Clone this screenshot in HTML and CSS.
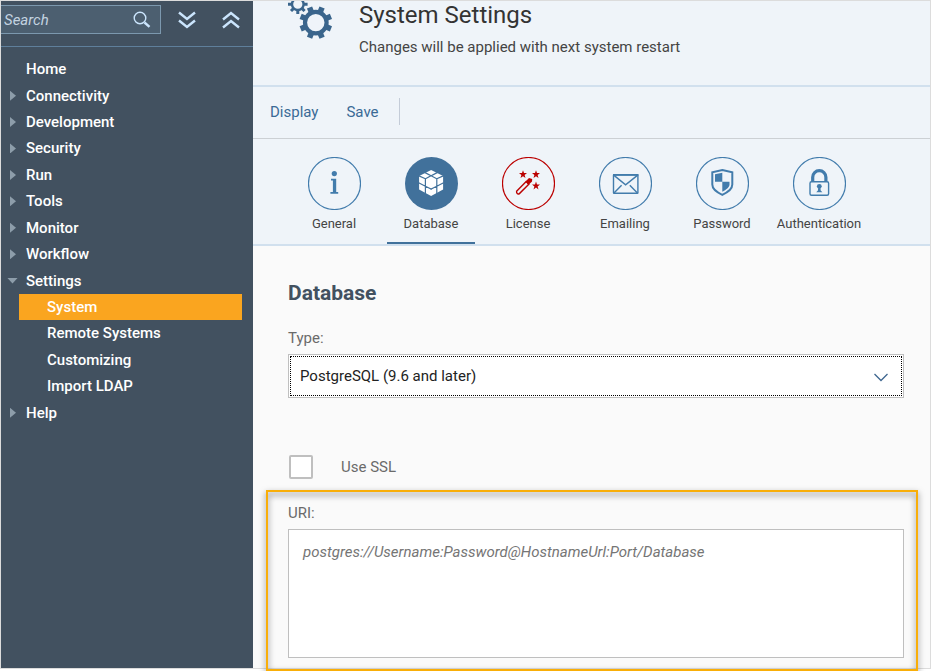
FILE: index.html
```html
<!DOCTYPE html>
<html lang="en">
<head>
<meta charset="utf-8">
<title>System Settings</title>
<link rel="stylesheet" href="styles.css">
</head>
<body>
<div class="app">
  <aside class="sidebar">
    <div class="search-bar">
      <div class="search">
        <input type="search" placeholder="Search" aria-label="Search">
        <button class="search-button" aria-label="Start search">
          <svg width="18" height="18" viewBox="0 0 18 18"><circle cx="7" cy="7" r="5.8" fill="none" stroke="currentColor" stroke-width="1.4"/><path d="M11.5 11.5l5 4.4" stroke="currentColor" stroke-width="2.4"/></svg>
        </button>
      </div>
      <button class="tree-button" aria-label="Expand all">
        <svg width="18" height="18" viewBox="0 0 18 18"><path d="M1 1.5l8 6.5 8-6.5M1 9.5l8 6.5 8-6.5"/></svg>
      </button>
      <button class="tree-button" aria-label="Collapse all">
        <svg width="18" height="18" viewBox="0 0 18 18"><path d="M1 8.5L9 2l8 6.5M1 16.5L9 10l8 6.5"/></svg>
      </button>
    </div>
    <nav>
      <ul class="tree">
        <li><a class="leaf" href="#">Home</a></li>
        <li><a class="closed" href="#">Connectivity</a></li>
        <li><a class="closed" href="#">Development</a></li>
        <li><a class="closed" href="#">Security</a></li>
        <li><a class="closed" href="#">Run</a></li>
        <li><a class="closed" href="#">Tools</a></li>
        <li><a class="closed" href="#">Monitor</a></li>
        <li><a class="closed" href="#">Workflow</a></li>
        <li class="group">
          <a class="open" href="#">Settings</a>
          <ul class="subtree">
            <li><a class="selected" href="#">System</a></li>
            <li><a href="#">Remote Systems</a></li>
            <li><a href="#">Customizing</a></li>
            <li><a href="#">Import LDAP</a></li>
          </ul>
        </li>
        <li><a class="closed" href="#">Help</a></li>
      </ul>
    </nav>
  </aside>

  <main>
    <header class="page-header">
      <svg class="gears" width="48" height="40" viewBox="287 1 48 40" fill="none" stroke="currentColor">
        <circle cx="315.8" cy="22.6" r="10.8" stroke-width="4.2"/>
        <g stroke-width="5.6">
          <path id="tooth" d="M315.8 10.6v-4.4" transform="rotate(22.5 315.8 22.6)"/>
          <use href="#tooth" transform="rotate(45 315.8 22.6)"/>
          <use href="#tooth" transform="rotate(90 315.8 22.6)"/>
          <use href="#tooth" transform="rotate(135 315.8 22.6)"/>
          <use href="#tooth" transform="rotate(180 315.8 22.6)"/>
          <use href="#tooth" transform="rotate(225 315.8 22.6)"/>
          <use href="#tooth" transform="rotate(270 315.8 22.6)"/>
          <use href="#tooth" transform="rotate(315 315.8 22.6)"/>
        </g>
        <circle cx="297.8" cy="4.2" r="5.8" stroke-width="2.4"/>
        <path stroke-width="3" d="M304 4.2h3.6M291.6 4.2H288M297.8 10.4v3.6M302.2 8.6l2.4 2.4M293.4 8.6l-2.4 2.4M302.2-.2l2.4-2.4"/>
      </svg>
      <div>
        <h1>System Settings</h1>
        <p>Changes will be applied with next system restart</p>
      </div>
    </header>

    <div class="toolbar">
      <button>Display</button>
      <button>Save</button>
      <span class="separator"></span>
    </div>

    <div class="tabs" role="tablist">
      <button class="tab" role="tab">
        <svg width="53" height="53" viewBox="0 0 53 53"><circle class="ring" cx="26.5" cy="26.5" r="26"/><circle cx="26.3" cy="16.6" r="2.6"/><path d="M23 21.8h5.2V35h2v1.8h-7.8V35h2.5V23.6H23z"/></svg>
        <span>General</span>
      </button>
      <button class="tab active" role="tab" aria-selected="true">
        <svg width="53" height="53" viewBox="0 0 53 53"><circle cx="26.5" cy="26.5" r="26.5"/><path fill="#fff" d="M26.1 13l12 6v13.6l-12 6.4-12-6.4V19z"/><path class="cut" d="M26.1 18.8l5.7 3v7.4l-5.7 2.8-5.7-2.8v-7.4zM19.600 15.400l6.500 3.400 6.500-3.400M20.400 21.800l-7-3.200M31.800 21.800l7-3.200M20.400 29v8M31.800 29v8M13.600 25.800l6.800 3.400M38.600 25.800l-6.800 3.400M26.100 32v1"/></svg>
        <span>Database</span>
      </button>
      <button class="tab critical" role="tab">
        <svg width="53" height="53" viewBox="0 0 53 53"><circle class="ring" cx="26.5" cy="26.5" r="26"/><path id="star" d="M21 13.2l1 2.9h3l-2.4 1.9.9 3-2.5-1.8-2.5 1.8.9-3-2.4-1.9h3z"/><use href="#star" x="13"/><use href="#star" x="13" y="11.4"/><path class="line" d="M14.6 34.2l9.6-9.6 2.6 2.6-9.6 9.6q-1.2.6-2-.2t-.6-2.4z"/><path d="M23.6 24.6l3.4-3.6 3.2 1-.2 2.6-3.6 3.4z"/></svg>
        <span>License</span>
      </button>
      <button class="tab" role="tab">
        <svg width="53" height="53" viewBox="0 0 53 53"><circle class="ring" cx="26.5" cy="26.5" r="26"/><rect class="line" x="14.5" y="17.7" width="24.4" height="18.6" rx=".5"/><path d="M14 17h25.4v1.8H14z"/><path class="line" d="M15 18.4l11.6 9.4 11.8-9.4M15 36l7.6-7.8M38.4 36l-7.6-7.8"/></svg>
        <span>Emailing</span>
      </button>
      <button class="tab" role="tab">
        <svg width="53" height="53" viewBox="0 0 53 53"><circle class="ring" cx="26.5" cy="26.5" r="26"/><path class="thick" d="M26.3 13l10 2.2v12.4c0 4.6-5 8-10 10.2-5-2.2-10-5.6-10-10.2V15.2z"/><path d="M19 17.3l7.3-1.5v9h7.2v2.6c0 2.8-3.4 5.3-7.2 7.3v-9.9H19z"/></svg>
        <span>Password</span>
      </button>
      <button class="tab" role="tab">
        <svg width="53" height="53" viewBox="0 0 53 53"><circle class="ring" cx="26.5" cy="26.5" r="26"/><rect class="line" x="17" y="24.7" width="18.6" height="13.5" rx="1.5"/><path class="shackle" d="M19.7 24.5v-4.3a6.6 6.6 0 0 1 13.2 0v4.3"/><circle cx="26.3" cy="29.3" r="2.4"/><path d="M25.3 30h2l.4 3.4 1.700 1.8h-6.200l1.700-1.8z"/></svg>
        <span>Authentication</span>
      </button>
    </div>

    <form class="content">
      <h2>Database</h2>
      <label class="caption" for="type">Type:</label>
      <div class="select">
        <select id="type"><option>PostgreSQL (9.6 and later)</option></select>
        <svg width="16" height="12" viewBox="0 0 16 12"><path d="M1.5 4L8 10.500 14.500 4"/></svg>
      </div>
      <div class="check">
        <input type="checkbox" id="ssl">
        <label for="ssl">Use SSL</label>
      </div>
      <div class="uri">
        <label class="caption" for="uri">URI:</label>
        <textarea id="uri" placeholder="postgres://Username:Password@HostnameUrl:Port/Database"></textarea>
      </div>
    </form>
  </main>
</div>
</body>
</html>
```
FILE: styles.css
```css
* { box-sizing: border-box; }

body {
  margin: 0;
  background: #fff;
  color: #444;
  font: 15px/20px Roboto, "Liberation Sans", sans-serif;
}

h1, h2, p, ul { margin: 0; padding: 0; }
ul { list-style: none; }
a { color: inherit; text-decoration: none; }
button { padding: 0; border: 0; background: none; color: inherit; font: inherit; }
svg { display: block; }

.app {
  display: grid;
  grid-template-columns: 252px 1fr;
  margin-bottom: 2px;
  border: 1px solid #dcdcdc;
}

/* Navigation */
.sidebar { background: #425160; color: #fff; }

.search-bar {
  display: flex;
  align-items: center;
  height: 46px;
  padding-bottom: 8px;
  border-bottom: 1px solid #5f7f9b;
  color: #cbe5fd;
}

.search {
  display: flex;
  align-items: center;
  width: 160px;
  height: 29px;
  margin-right: 17px;
  padding-right: 9px;
  border: 1px solid #7c98ae;
  border-left: 0;
  background: #4c5f70;
}

.search input {
  flex: 1;
  min-width: 0;
  padding: 0 3px;
  border: 0;
  outline: 0;
  background: none;
  color: inherit;
  font: inherit;
}
.search input::placeholder { color: #c3d3e0; font-style: italic; }

.tree-button { margin-right: 26px; }
.tree-button path { fill: none; stroke: currentColor; stroke-width: 2.4; }
.tree-button:last-child { margin-right: 0; }

.tree {
  display: flex;
  flex-direction: column;
  height: 370px;
  margin-top: 9px;
  font-weight: 500;
}
.tree > li { flex: 1; }
.tree > .group { flex: 5; display: grid; grid-template-rows: 1fr 4fr; }
.subtree { display: grid; grid-template-rows: repeat(4, 1fr); }
.tree a { display: flex; align-items: center; height: 100%; padding-left: 25px; }
.subtree a { margin: 0 11px 0 18px; padding-left: 28px; }
.subtree .selected { background: #faa51f; }

.tree .closed, .tree .open { gap: 10px; padding-left: 9px; }
.closed::before, .open::before {
  content: "";
  width: 6px;
  height: 10px;
  background: #8d9daa;
  clip-path: polygon(0 0, 100% 50%, 0 100%);
}
.tree .open { gap: 8px; padding-left: 6px; }
.open::before { width: 11px; height: 6px; clip-path: polygon(0 0, 100% 0, 50% 100%); }

/* Page header */
main { min-width: 0; background: #fafafa; }

.page-header {
  display: flex;
  gap: 24px;
  height: 86px;
  padding-left: 34px;
  border-bottom: 2px solid #d1e0ee;
  background: #eff4f9;
}
.gears { color: #3a658c; }
h1 { margin-bottom: 8px; font-size: 24px; line-height: 28px; font-weight: 400; color: #333; }

.toolbar {
  display: flex;
  align-items: center;
  gap: 28px;
  height: 52px;
  padding: 0 0 2px 17px;
  border-bottom: 1px solid #ccd0d4;
  background: #eff4f9;
  color: #3a6a96;
}
.separator { width: 1px; height: 27px; margin-left: -8px; background: #c4ccd8; }

/* Tabs */
.tabs {
  display: flex;
  gap: 9px;
  height: 107px;
  padding: 18px 0 0 37px;
  border-bottom: 2px solid #d1e0ee;
  background: #eff4f9;
}
.tab {
  display: flex;
  flex-direction: column;
  align-items: center;
  gap: 4px;
  width: 88px;
  border-bottom: 2px solid transparent;
  font-size: 13px;
}
.tab.active { border-color: #41719b; }
.tab svg { fill: #427cac; }
.tab.active svg { fill: #41719b; }
.tab.critical svg { fill: #b00; }
.ring, .line, .thick, .shackle, .cut { fill: none; stroke: #427cac; stroke-width: 1.2; }
.line { stroke-width: 1.4; }
.thick { stroke-width: 2; }
.shackle { stroke-width: 3.2; }
.cut { stroke: #41719b; }
.critical .ring, .critical .line { stroke: #b00; }

/* Form */
.content { padding: 35px 26px 10px 35px; color: #6a6a6a; }
h2 { margin-bottom: 23px; font-size: 21px; line-height: 24px; font-weight: 700; color: #425160; }
.caption { display: block; margin-bottom: 6px; }

.select { display: grid; align-items: center; }
.select > * { grid-area: 1 / 1; }
.select select {
  width: 100%;
  height: 44px;
  padding: 0 11px;
  appearance: none;
  border: 1px solid #bfbfbf;
  border-radius: 0;
  outline: 1px dotted #000;
  outline-offset: -3px;
  background: #fff;
  color: #222;
  font: inherit;
}
.select svg {
  justify-self: end;
  margin-right: 15px;
  fill: none;
  stroke: #3f6790;
  stroke-width: 1.3;
  pointer-events: none;
}

.check { display: flex; align-items: center; gap: 28px; margin: 57px 0 24px 1px; }
.check input {
  width: 24px;
  height: 24px;
  margin: 0;
  appearance: none;
  border: 2px solid #bfbfbf;
  border-radius: 2px;
  background: #fff;
}

.uri { position: relative; }
.uri::before {
  content: "";
  position: absolute;
  inset: -13px -14px -13px -22px;
  border: 2px solid #f9ae08;
  filter: drop-shadow(0 3px 3px rgba(0, 0, 0, .6));
  pointer-events: none;
}
.uri textarea {
  display: block;
  width: 100%;
  height: 129px;
  padding: 12px 14px;
  border: 1px solid #bfbfbf;
  outline: 0;
  resize: none;
  background: #fff;
  font: inherit;
}
.uri textarea::placeholder { color: #757575; font-style: italic; }
```
